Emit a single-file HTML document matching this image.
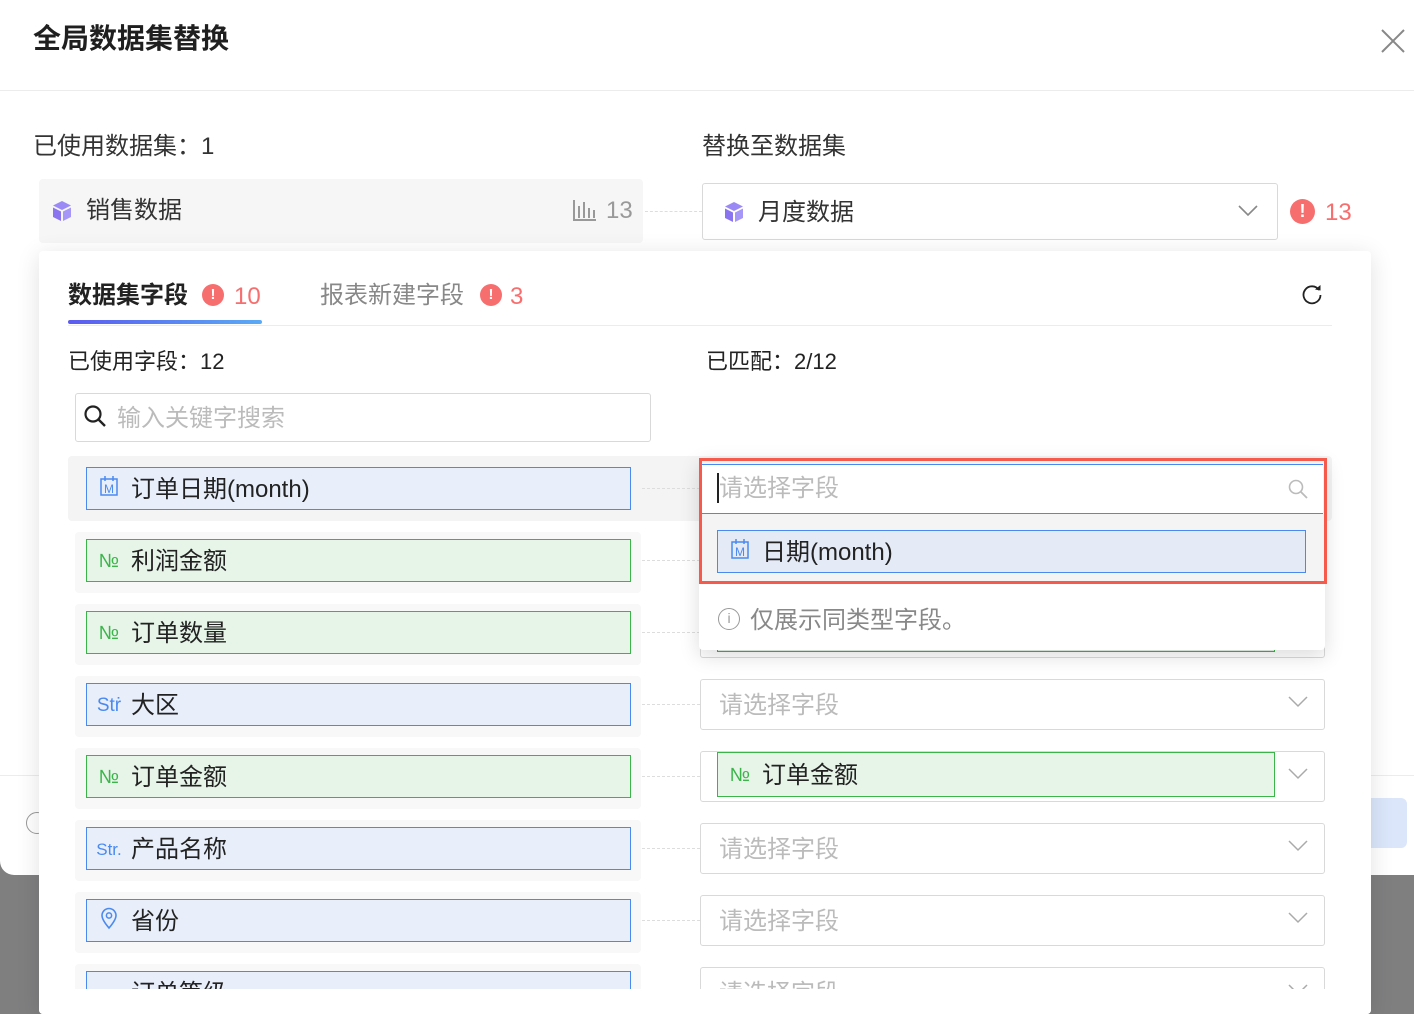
<!DOCTYPE html>
<html><head><meta charset="utf-8"><style>
*{box-sizing:border-box;margin:0;padding:0}
body{width:1414px;height:1014px;overflow:hidden;background:#7f7f80;font-family:"Liberation Sans","Noto Sans CJK SC",sans-serif;color:#222;position:relative;line-height:1.3}
.abs{position:absolute}
.dlg{left:0;top:0;width:1414px;height:875px;background:#fff;border-radius:0 0 0 14px}
.t{font-size:28px;font-weight:bold;left:33px;top:21px;color:#1f1f1f}
.hline{left:0;top:90px;width:1414px;height:1px;background:#ececec}
.lbl{font-size:24px;color:#333}
.cube{width:22px;height:22px}
.panel{left:39px;top:251px;width:1332px;height:763px;background:#fff;border-radius:4px;box-shadow:0 4px 24px rgba(0,0,0,.12);overflow:hidden}
.tag{position:absolute;height:43px;display:flex;align-items:center;font-size:24px;color:#222;padding-top:3px}
.tag.b{background:#e8eefa;border:1px solid #4a8af0}
.tag.g{background:#e7f4e8;border:1px solid #3bb54a}
.ic{width:44px;text-align:center;font-size:19px}
.sel{position:absolute;left:661px;width:625px;height:51px;border:1px solid #d9d9d9;border-radius:3px;background:#fff;font-size:24px;color:#bbb;display:flex;align-items:center;padding-left:18px;padding-top:3px}
.chev{position:absolute;right:16px;top:16px}
.dash{position:absolute;left:603px;width:58px;border-top:1px dashed #ddd}
.rowbg{position:absolute;left:36px;width:566px;height:61px;background:#f8f8f8;border-radius:4px}
</style></head><body>
<div class="abs dlg"></div>
<div class="abs t">全局数据集替换</div>
<svg class="abs" style="left:1380px;top:28px" width="26" height="26"><path d="M2 2L24 24M24 2L2 24" stroke="#888" stroke-width="2"/></svg>
<div class="abs hline"></div>
<div class="abs lbl" style="left:33px;top:131px">已使用数据集：1</div>
<div class="abs lbl" style="left:702px;top:131px">替换至数据集</div>
<div class="abs" style="left:39px;top:179px;width:604px;height:64px;background:#f6f6f6;border-radius:4px"></div>
<svg class="abs cube" style="left:51px;top:200px" viewBox="0 0 22 22"><path d="M11 1L20 5.5L11 10L2 5.5Z" fill="#9b8af5"/><path d="M2 7.5L10 11.5V21L2 17Z" fill="#8b74f0"/><path d="M12 11.5L20 7.5V17L12 21Z" fill="#a596f7"/></svg>
<div class="abs lbl" style="left:86px;top:195px;color:#333">销售数据</div>
<svg class="abs" style="left:572px;top:198px" width="26" height="24"><path d="M2 2V22H24M7 8V20M12 4V20M17 10V20M22 12V20" stroke="#999" stroke-width="2" fill="none"/></svg>
<div class="abs lbl" style="left:606px;top:195px;color:#999">13</div>
<div class="abs" style="left:645px;top:211px;width:57px;border-top:1px dashed #ddd"></div>
<div class="abs" style="left:702px;top:183px;width:576px;height:57px;border:1px solid #d9d9d9;border-radius:3px"></div>
<svg class="abs cube" style="left:723px;top:201px" viewBox="0 0 22 22"><path d="M11 1L20 5.5L11 10L2 5.5Z" fill="#9b8af5"/><path d="M2 7.5L10 11.5V21L2 17Z" fill="#8b74f0"/><path d="M12 11.5L20 7.5V17L12 21Z" fill="#a596f7"/></svg>
<div class="abs lbl" style="left:758px;top:197px">月度数据</div>
<svg class="abs" style="left:1238px;top:205px" width="20" height="12"><path d="M1 1L10 10L19 1" stroke="#888" stroke-width="1.6" fill="none"/></svg>
<div class="abs" style="left:1290px;top:199px;width:25px;height:25px;border-radius:50%;background:#f76e6e;color:#fff;font-size:18px;font-weight:bold;text-align:center;line-height:25px">!</div>
<div class="abs lbl" style="left:1325px;top:197px;color:#f76e6e">13</div>
<div class="abs" style="left:0;top:775px;width:1414px;height:1px;background:#ececec"></div>
<div class="abs" style="left:26px;top:812px;width:22px;height:22px;border:1.5px solid #999;border-radius:50%"></div>
<div class="abs" style="left:1360px;top:798px;width:47px;height:50px;background:#dbe6fb;border-radius:6px"></div>

<div class="abs panel">
  <div class="abs" style="left:29px;top:29px;font-size:24px;font-weight:bold;color:#222">数据集字段</div>
  <div class="abs" style="left:163px;top:33px;width:22px;height:22px;border-radius:50%;background:#f76e6e;color:#fff;font-size:15px;font-weight:bold;text-align:center;line-height:22px">!</div>
  <div class="abs" style="left:195px;top:30px;font-size:24px;color:#f76e6e">10</div>
  <div class="abs" style="left:29px;top:69px;width:194px;height:4px;border-radius:2px;background:linear-gradient(90deg,#5b5bf0,#5aaaf5)"></div>
  <div class="abs" style="left:281px;top:29px;font-size:24px;color:#888">报表新建字段</div>
  <div class="abs" style="left:441px;top:33px;width:22px;height:22px;border-radius:50%;background:#f76e6e;color:#fff;font-size:15px;font-weight:bold;text-align:center;line-height:22px">!</div>
  <div class="abs" style="left:471px;top:30px;font-size:24px;color:#f76e6e">3</div>
  <svg class="abs" style="left:1262px;top:32px" width="22" height="22"><path d="M18 7A8.5 8.5 0 1 0 19.5 12" stroke="#222" stroke-width="1.8" fill="none"/><path d="M14 6.5L19.5 7.5L19.5 2" fill="#222"/></svg>
  <div class="abs" style="left:29px;top:74px;width:1264px;height:1px;background:#ececec"></div>
  <div class="abs" style="left:29px;top:97px;font-size:22px;color:#222">已使用字段：12</div>
  <div class="abs" style="left:667px;top:97px;font-size:22px;color:#222">已匹配：2/12</div>
  <div class="abs" style="left:36px;top:142px;width:576px;height:49px;border:1px solid #d9d9d9;border-radius:3px"></div>
  <svg class="abs" style="left:44px;top:153px" width="26" height="26"><circle cx="10" cy="10" r="7.5" stroke="#222" stroke-width="2.2" fill="none"/><path d="M15.5 15.5L22 22" stroke="#222" stroke-width="2.4"/></svg>
  <div class="abs" style="left:78px;top:152px;font-size:24px;color:#bbb">输入关键字搜索</div>

  <div class="abs" style="left:29px;top:205px;width:1264px;height:65px;background:#f4f4f4;border-radius:4px"></div>
  <div class="rowbg" style="top:281px"></div><div class="rowbg" style="top:353px"></div><div class="rowbg" style="top:425px"></div><div class="rowbg" style="top:497px"></div><div class="rowbg" style="top:569px"></div><div class="rowbg" style="top:641px"></div><div class="rowbg" style="top:713px"></div>

  <div class="tag b" style="left:47px;top:216px;width:545px"><span class="ic"><svg width="20" height="22"><rect x="2" y="4" width="16" height="16" stroke="#4a8af0" stroke-width="1.5" fill="none"/><path d="M6 1V6M14 1V6" stroke="#4a8af0" stroke-width="1.5"/><text x="10" y="18" font-size="12" fill="#4a8af0" text-anchor="middle" font-family="Liberation Sans">M</text></svg></span>订单日期(month)</div>
  <div class="tag g" style="left:47px;top:288px;width:545px"><span class="ic" style="color:#3bb54a">№</span>利润金额</div>
  <div class="tag g" style="left:47px;top:360px;width:545px"><span class="ic" style="color:#3bb54a">№</span>订单数量</div>
  <div class="tag b" style="left:47px;top:432px;width:545px"><span class="ic" style="color:#4a8af0">Stṙ</span>大区</div>
  <div class="tag g" style="left:47px;top:504px;width:545px"><span class="ic" style="color:#3bb54a">№</span>订单金额</div>
  <div class="tag b" style="left:47px;top:576px;width:545px"><span class="ic" style="color:#4a8af0;font-size:17px">Str.</span>产品名称</div>
  <div class="tag b" style="left:47px;top:648px;width:545px"><span class="ic"><svg width="20" height="24"><path d="M10 22C4 15 3 12 3 9.5A7 7 0 0 1 17 9.5C17 12 16 15 10 22Z" stroke="#4a8af0" stroke-width="1.6" fill="none"/><circle cx="10" cy="9.5" r="2.6" stroke="#4a8af0" stroke-width="1.5" fill="none"/></svg></span>省份</div>
  <div class="tag b" style="left:47px;top:720px;width:545px"><span class="ic" style="color:#4a8af0">○</span>订单等级</div>

  <div class="dash" style="top:237px"></div><div class="dash" style="top:309px"></div><div class="dash" style="top:381px"></div><div class="dash" style="top:453px"></div><div class="dash" style="top:525px"></div><div class="dash" style="top:597px"></div><div class="dash" style="top:669px"></div><div class="dash" style="top:741px"></div>

  <div class="sel" style="top:356px"></div>
  <div class="tag g" style="left:678px;top:358px;width:558px"></div>
  <div class="sel" style="top:428px">请选择字段<svg class="chev" width="20" height="12"><path d="M1 1L10 10L19 1" stroke="#aaa" stroke-width="1.5" fill="none"/></svg></div>
  <div class="sel" style="top:500px;padding-left:0"><div class="tag g" style="left:16px;top:0;width:558px;height:45px"><span class="ic" style="color:#3bb54a">№</span>订单金额</div><svg class="chev" width="20" height="12"><path d="M1 1L10 10L19 1" stroke="#aaa" stroke-width="1.5" fill="none"/></svg></div>
  <div class="sel" style="top:572px">请选择字段<svg class="chev" width="20" height="12"><path d="M1 1L10 10L19 1" stroke="#aaa" stroke-width="1.5" fill="none"/></svg></div>
  <div class="sel" style="top:644px">请选择字段<svg class="chev" width="20" height="12"><path d="M1 1L10 10L19 1" stroke="#aaa" stroke-width="1.5" fill="none"/></svg></div>
  <div class="sel" style="top:716px">请选择字段<svg class="chev" width="20" height="12"><path d="M1 1L10 10L19 1" stroke="#aaa" stroke-width="1.5" fill="none"/></svg></div>

  <div class="abs" style="left:660px;top:207px;width:626px;height:192px;background:#fff;border-radius:4px;box-shadow:0 6px 20px rgba(0,0,0,.14)"></div>
  <div class="abs" style="left:660px;top:207px;width:626px;height:125px;background:#f4f4f4"></div>
  <div class="abs" style="left:663px;top:213px;width:621px;height:50px;background:#fff;border:1px solid #4a8af0;border-left:none;border-right:none"></div>
  <div class="abs" style="left:678px;top:222px;width:2px;height:30px;background:#222"></div>
  <div class="abs" style="left:680px;top:222px;font-size:24px;color:#bbb">请选择字段</div>
  <svg class="abs" style="left:1248px;top:227px" width="22" height="22"><circle cx="9" cy="9" r="6.5" stroke="#bbb" stroke-width="1.6" fill="none"/><path d="M14 14L20 20" stroke="#bbb" stroke-width="1.8"/></svg>
  <div class="tag b" style="left:678px;top:279px;width:589px;height:43px;background:#e4eaf6"><span class="ic"><svg width="20" height="22"><rect x="2" y="4" width="16" height="16" stroke="#4a8af0" stroke-width="1.5" fill="none"/><path d="M6 1V6M14 1V6" stroke="#4a8af0" stroke-width="1.5"/><text x="10" y="18" font-size="12" fill="#4a8af0" text-anchor="middle" font-family="Liberation Sans">M</text></svg></span>日期(month)</div>
  <div class="abs" style="left:660px;top:207px;width:628px;height:126px;border:3px solid #f55a4a"></div>
  <div class="abs" style="left:679px;top:357px;width:22px;height:22px;border:1.5px solid #999;border-radius:50%;color:#999;font-size:14px;text-align:center;line-height:19px">i</div>
  <div class="abs" style="left:711px;top:354px;font-size:24px;color:#888">仅展示同类型字段。</div>
  <div class="abs" style="left:0;top:738px;width:1332px;height:25px;background:#fff"></div>
</div>
</body></html>
